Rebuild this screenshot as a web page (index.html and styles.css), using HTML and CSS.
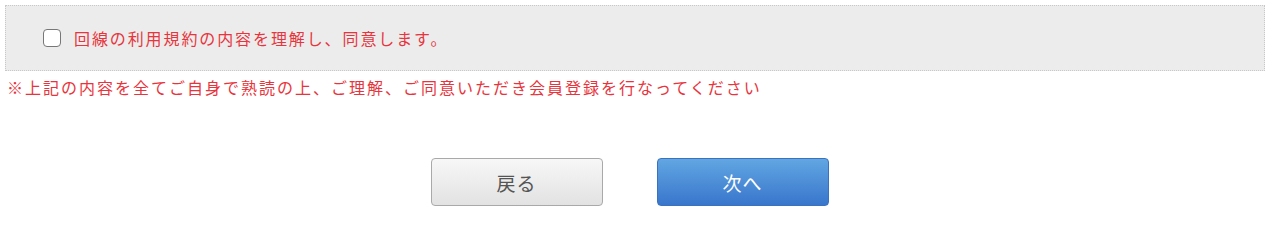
FILE: index.html
```html
<!DOCTYPE html>
<html lang="ja">
<head>
<meta charset="utf-8">
<link rel="stylesheet" href="styles.css">
</head>
<body>
<div class="page">
  <div class="agree-box">
    <label class="agree">
      <span class="check"></span>
      <span class="agree-text">回線の利用規約の内容を理解し、同意します。</span>
    </label>
  </div>
  <p class="note">※上記の内容を全てご自身で熟読の上、ご理解、ご同意いただき会員登録を行なってください</p>
  <div class="actions">
    <button class="btn btn-back">戻る</button>
    <button class="btn btn-next">次へ</button>
  </div>
</div>
</body>
</html>
```
FILE: styles.css
```css
html, body {
  margin: 0;
  padding: 0;
  background: #ffffff;
}
body {
  font-family: "Noto Sans CJK JP", "Noto Sans", sans-serif;
}
.page {
  padding: 5px 5px 0 5px;
}
.agree-box {
  height: 64px;
  background: #ececec;
  border: 1px dotted #c8c8c8;
  display: flex;
  align-items: center;
  padding-left: 37px;
}
.agree {
  display: flex;
  align-items: center;
}
.check {
  width: 16px;
  height: 16px;
  border: 1.5px solid #777;
  border-radius: 4px;
  background: #fff;
  margin-right: 13px;
  margin-top: -1px;
}
.agree-text {
  color: #e8343c;
  font-size: 16px;
  letter-spacing: 1.9px;
  line-height: 20px;
}
.note {
  margin: 5px 0 0 2px;
  color: #e8343c;
  font-size: 16px;
  letter-spacing: 2px;
  line-height: 22px;
}
.actions {
  display: flex;
  justify-content: center;
  gap: 54px;
  margin-top: 60px;
  padding-right: 11px;
}
.btn {
  width: 172px;
  height: 48px;
  border-radius: 4px;
  font-family: "Noto Sans CJK JP", sans-serif;
  font-size: 19px;
  letter-spacing: 1px;
  padding: 0;
}
.btn-back {
  color: #555;
  border: 1px solid #a9a9a9;
  background: linear-gradient(#f7f7f7, #e2e2e2);
}
.btn-next {
  color: #ffffff;
  border: 1px solid #3a72c0;
  background: linear-gradient(#62a6e2, #3876cc);
}
```
